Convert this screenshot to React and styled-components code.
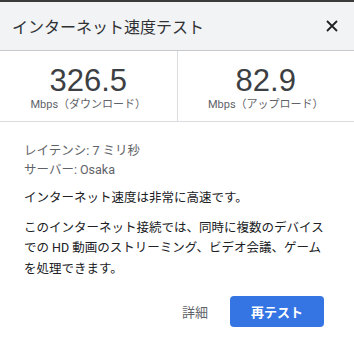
import React from 'react';
import styled, { createGlobalStyle } from 'styled-components';

const GlobalStyle = createGlobalStyle`
    body {
        margin: 0;
        background: #ffffff;
        font-family: Roboto, "Noto Sans CJK JP", sans-serif;
    }
`

function Metric({ value, label }) {
    return (
        <MetricCell>
            <Value>{value}</Value>
            <Unit>{label}</Unit>
        </MetricCell>
    )
}

function App() {
    return (
        <Dialog>
            <GlobalStyle />
            <Header>
                <Title>インターネット速度テスト</Title>
                <CloseButton aria-label="閉じる">
                    <svg width="12" height="12" viewBox="0 0 12 12">
                        <path d="M1 1L11 11M11 1L1 11" stroke="#202124" strokeWidth="1.8" />
                    </svg>
                </CloseButton>
            </Header>
            <Metrics>
                <Metric value="326.5" label="Mbps（ダウンロード）" />
                <Divider />
                <Metric value="82.9" label="Mbps（アップロード）" />
            </Metrics>
            <Body>
                <Info>
                    <div>レイテンシ: 7 ミリ秒</div>
                    <div>サーバー: Osaka</div>
                </Info>
                <Text>インターネット速度は非常に高速です。</Text>
                <Text>
                    このインターネット接続では、同時に複数のデバイスでの HD 動画のストリーミング、ビデオ会議、ゲームを処理できます。
                </Text>
            </Body>
            <Actions>
                <LinkButton>詳細</LinkButton>
                <PrimaryButton>再テスト</PrimaryButton>
            </Actions>
        </Dialog>
    )
}

export default App

const Dialog = styled.div`
    width: 354px;
    height: 338px;
    box-sizing: border-box;
    border-top: 2px solid #3a3a3a;
    display: flex;
    flex-direction: column;
    background: #fff;
`

const Header = styled.div`
    height: 48px;
    background: #f1f3f4;
    border-bottom: 1px solid #c8c8c8;
    display: flex;
    align-items: center;
    justify-content: space-between;
    padding: 0 16px 0 12px;
`

const Title = styled.span`
    font-size: 16px;
    color: #303134;
`

const CloseButton = styled.button`
    border: none;
    background: none;
    padding: 0;
    display: flex;
    cursor: pointer;
`

const Metrics = styled.div`
    height: 70px;
    display: flex;
    border-bottom: 1px solid #dadce0;
`

const MetricCell = styled.div`
    flex: 1;
    display: flex;
    flex-direction: column;
    align-items: center;
    padding-top: 13px;
`

const Divider = styled.div`
    width: 1px;
    background: #dadce0;
`

const Value = styled.div`
    font-family: "Liberation Sans", Arial, sans-serif;
    font-size: 31px;
    line-height: 34px;
    color: #3c4043;
`

const Unit = styled.div`
    font-size: 11px;
    line-height: 14px;
    color: #5f6368;
`

const Body = styled.div`
    padding: 19px 26px 0 24px;
    display: flex;
    flex-direction: column;
    gap: 9px;
`

const Info = styled.div`
    font-size: 12.5px;
    line-height: 19px;
    color: #5f6368;
`

const Text = styled.p`
    margin: 0;
    font-size: 12.5px;
    line-height: 20.5px;
    color: #202124;
`

const Actions = styled.div`
    display: flex;
    justify-content: flex-end;
    align-items: center;
    gap: 22px;
    padding: 17px 30px 0 0;
`

const LinkButton = styled.button`
    border: none;
    background: none;
    font-family: inherit;
    font-size: 13px;
    color: #5f6368;
    padding: 0;
    cursor: pointer;
`

const PrimaryButton = styled.button`
    width: 94px;
    height: 31px;
    border: none;
    border-radius: 4px;
    background: #3574e3;
    color: #fff;
    font-family: inherit;
    font-size: 13px;
    font-weight: 700;
    cursor: pointer;
`
